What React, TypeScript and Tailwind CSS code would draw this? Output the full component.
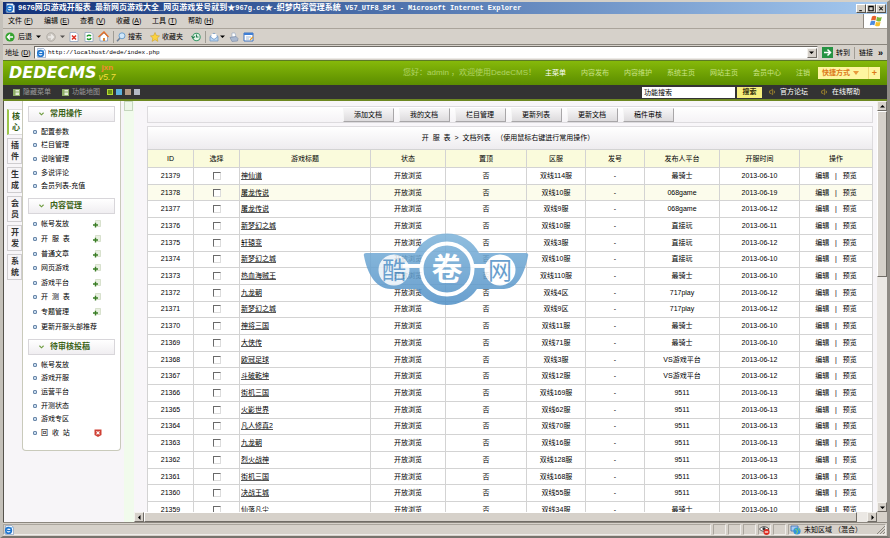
import type { ReactNode } from "react";
import { Volume1 } from "lucide-react";

type GameRow = {
  id: number;
  title: string;
  server: string;
  platform: string;
  date: string;
};

const rows: GameRow[] = [
  { id: 21379, title: "神仙道", server: "双线114服", platform: "最骑士", date: "2013-06-10" },
  { id: 21378, title: "屠龙传说", server: "双线10服", platform: "068game", date: "2013-06-19" },
  { id: 21377, title: "屠龙传说", server: "双线9服", platform: "068game", date: "2013-06-12" },
  { id: 21376, title: "新梦幻之城", server: "双线10服", platform: "直接玩", date: "2013-06-11" },
  { id: 21375, title: "轩辕变", server: "双线3服", platform: "直接玩", date: "2013-06-12" },
  { id: 21374, title: "新梦幻之城", server: "双线10服", platform: "直接玩", date: "2013-06-10" },
  { id: 21373, title: "热血海贼王", server: "双线110服", platform: "最骑士", date: "2013-06-10" },
  { id: 21372, title: "九龙朝", server: "双线4区", platform: "717play", date: "2013-06-12" },
  { id: 21371, title: "新梦幻之城", server: "双线9区", platform: "717play", date: "2013-06-12" },
  { id: 21370, title: "神将三国", server: "双线11服", platform: "最骑士", date: "2013-06-10" },
  { id: 21369, title: "大侠传", server: "双线71服", platform: "最骑士", date: "2013-06-10" },
  { id: 21368, title: "欧冠足球", server: "双线3服", platform: "VS游戏平台", date: "2013-06-12" },
  { id: 21367, title: "斗破乾坤", server: "双线12服", platform: "VS游戏平台", date: "2013-06-12" },
  { id: 21366, title: "街机三国", server: "双线169服", platform: "9511", date: "2013-06-13" },
  { id: 21365, title: "火影世界", server: "双线62服", platform: "9511", date: "2013-06-13" },
  { id: 21364, title: "凡人修真2", server: "双线70服", platform: "9511", date: "2013-06-13" },
  { id: 21363, title: "九龙朝", server: "双线16服", platform: "9511", date: "2013-06-13" },
  { id: 21362, title: "烈火战神", server: "双线128服", platform: "9511", date: "2013-06-13" },
  { id: 21361, title: "街机三国", server: "双线168服", platform: "9511", date: "2013-06-13" },
  { id: 21360, title: "决战王城", server: "双线55服", platform: "9511", date: "2013-06-13" },
  { id: 21359, title: "仙落凡尘", server: "双线34服", platform: "最骑士", date: "2013-06-10" },
];

const columns = [
  { label: "ID", width: "w-[46px]" },
  { label: "选择", width: "w-[46px]" },
  { label: "游戏标题", width: "w-[131px]" },
  { label: "状态", width: "w-[75px]" },
  { label: "置顶", width: "w-[81px]" },
  { label: "区服", width: "w-[59px]" },
  { label: "发号", width: "w-[59px]" },
  { label: "发布人平台", width: "w-[75px]" },
  { label: "开服时间", width: "w-[80px]" },
  { label: "操作", width: "w-[73px]" },
];

const ieMenus = [
  ["文件", "F"],
  ["编辑", "E"],
  ["查看", "V"],
  ["收藏", "A"],
  ["工具", "T"],
  ["帮助", "H"],
];

const topNav = ["主菜单", "内容发布", "内容维护", "系统主页", "网站主页", "会员中心", "注销"];
const sideTabs = ["核心", "插件", "生成", "会员", "开发", "系统"];
const toolButtons = ["添加文档", "我的文档", "栏目管理", "更新列表", "更新文档", "稿件审核"];

const sideGroups = [
  {
    title: "常用操作",
    height: "h-[68px]",
    items: ["配置参数", "栏目管理", "说啥管理", "多说评论", "会员列表-充值"],
    addable: 0,
  },
  {
    title: "内容管理",
    height: "h-[117px]",
    items: ["帐号发放", "开  服  表", "普通文章", "网页游戏", "游戏平台", "开  测  表", "专题管理", "更新开服头部推荐"],
    addable: 7,
  },
  {
    title: "待审核投稿",
    height: "h-[82px]",
    items: ["帐号发放", "游戏开服", "运营平台", "开测状态", "游戏专区", "回  收  站"],
    addable: 0,
  },
];

function IeIcon() {
  return (
    <svg viewBox="0 0 12 12" className="h-[10px] w-[10px] shrink-0">
      <path d="M2 .5h7l2.5 2.5v8.500H2z" fill="#f4f9ff" stroke="#7892b8" strokeWidth=".8" />
      <circle cx="5.500" cy="6.500" r="3.400" fill="none" stroke="#1e73cc" strokeWidth="1.900" />
      <path d="M2.500 6.700h6.500" stroke="#1e73cc" strokeWidth="1.400" />
      <path d="M1 10C3 5 7 2.500 10.500 3" fill="none" stroke="#58a6e8" strokeWidth=".9" />
    </svg>
  );
}

function Divider() {
  return <span className="h-[12px] w-px shrink-0 bg-[#a09c94]" />;
}

function Triangle({ dir }: { dir: "up" | "down" | "left" | "right" }) {
  const paths = {
    up: "M1 4.500h5L3.500 2z",
    down: "M1 2.500h5L3.500 5z",
    left: "M4.500 1v5L2 3.500z",
    right: "M2.500 1v5L5 3.500z",
  };
  return (
    <svg viewBox="0 0 7 7" className="h-[7px] w-[7px]">
      <path d={paths[dir]} fill="#000" />
    </svg>
  );
}

function ScrollButton({ dir, label }: { dir: "up" | "down" | "left" | "right"; label: string }) {
  return (
    <button
      aria-label={label}
      className="flex h-[10px] w-[10px] shrink-0 items-center justify-center border border-t-[#f4f2ee] border-r-[#706c66] border-b-[#706c66] border-l-[#f4f2ee] bg-[#d6d1ca]"
    >
      <Triangle dir={dir} />
    </button>
  );
}

function TitleBar() {
  return (
    <header className="flex h-[12px] shrink-0 items-center bg-linear-to-r from-[#123078] to-[#a6caf0] pl-[2px] text-[8px] font-bold text-white">
      <IeIcon />
      <h1 className="ml-[3px] flex-1 whitespace-pre font-['Liberation_Mono','Noto_Sans_CJK_SC',monospace] leading-[12px]">
        <span className="text-[7px]">967G</span>网页游戏开服表<span className="text-[7px]">_</span>最新网页游戏大全
        <span className="text-[7px]">_</span>网页游戏发号就到★<span className="text-[7px]">967g.cc</span>★
        <span className="text-[7px]">-</span>织梦内容管理系统
        <span className="text-[7px]"> V57_UTF8_SP1 - Microsoft Internet Explorer</span>
      </h1>
      <div className="flex pr-px">
        <WindowButton label="最小化">
          <path d="M2 6.500h3" />
        </WindowButton>
        <WindowButton label="最大化">
          <path d="M1.500 1.500h5v5h-5zM1.500 2h5" />
        </WindowButton>
        <WindowButton label="关闭">
          <path d="M2 2l4 4M6 2L2 6" />
        </WindowButton>
      </div>
    </header>
  );
}

function WindowButton({ label, children }: { label: string; children: ReactNode }) {
  return (
    <button
      aria-label={label}
      className="h-[9px] w-[10px] border border-t-white border-r-[#55524c] border-b-[#55524c] border-l-white bg-[#d4d0c8]"
    >
      <svg viewBox="0 0 8 8" className="h-[7px] w-[8px]" fill="none" stroke="#000" strokeWidth="1.200">
        {children}
      </svg>
    </button>
  );
}

function MenuBar() {
  return (
    <nav className="flex h-[15px] shrink-0 items-center border-b border-[#aaa49b] pl-[5px]">
      {ieMenus.map(([name, key]) => (
        <button key={key} className="w-[36px] text-left">
          {name} (<u>{key}</u>)
        </button>
      ))}
      <span className="ml-auto flex h-full w-[24px] items-center justify-center border-l border-[#8d8880] bg-white">
        <svg viewBox="0 0 14 12" className="h-[12px] w-[14px]">
          <path d="M3 1.500c1.500-1 3-1 4.300 0L6.500 5.500C5 4.700 3.600 4.700 2 5.500z" fill="#e8622c" />
          <path d="M8 1.800c1.500.9 3 .9 4.800.1l-1 4c-1.500.8-3 .8-4.600-.1z" fill="#7cb83a" />
          <path d="M1.800 6.300c1.500-.9 3-.8 4.500 0l-.9 4C4 9.500 2.500 9.500.8 10.300z" fill="#4a8be0" />
          <path d="M7 6.700c1.500.8 3 .8 4.600 0l-.9 4c-1.500.8-3 .8-4.600 0z" fill="#f5bf2d" />
        </svg>
      </span>
    </nav>
  );
}

function ToolBar() {
  return (
    <div className="flex h-[16px] shrink-0 items-center border-b border-[#89847c] pl-[2px]">
      <button className="flex items-center gap-[3px]">
        <svg viewBox="0 0 10 10" className="h-[10px] w-[10px]">
          <circle cx="5" cy="5" r="4.600" fill="#35a32f" />
          <path d="M8 5H2.700M5 2.500L2.500 5 5 7.500" fill="none" stroke="#fff" strokeWidth="1.400" />
        </svg>
        后退
        <Triangle dir="down" />
      </button>
      <button aria-label="前进" className="ml-[4px] flex items-center gap-[3px] opacity-60">
        <svg viewBox="0 0 10 10" className="h-[10px] w-[10px]">
          <circle cx="5" cy="5" r="4.300" fill="#c4c0ba" stroke="#8c8882" strokeWidth=".7" />
          <path d="M2 5h5.300M5 2.500L7.500 5 5 7.500" fill="none" stroke="#fff" strokeWidth="1.400" />
        </svg>
        <Triangle dir="down" />
      </button>
      <button aria-label="停止" className="ml-[3px]">
        <svg viewBox="0 0 10 10" className="h-[10px] w-[10px]">
          <path d="M1 .5h6l2 2v7H1z" fill="#fff" stroke="#8fa2bd" strokeWidth=".8" />
          <path d="M3 3.500l4 4M7 3.500l-4 4" stroke="#dc2f20" strokeWidth="1.500" />
        </svg>
      </button>
      <button aria-label="刷新" className="ml-[5px]">
        <svg viewBox="0 0 10 10" className="h-[10px] w-[10px]">
          <path d="M1 .5h6l2 2v7H1z" fill="#fff" stroke="#8fa2bd" strokeWidth=".8" />
          <path d="M3 4.500C3.500 2.800 6 2.800 7 4M7 6C6.500 7.800 4 7.800 3 6.500" fill="none" stroke="#209a2c" strokeWidth="1.500" />
        </svg>
      </button>
      <button aria-label="主页" className="ml-[4px]">
        <svg viewBox="0 0 11 11" className="h-[11px] w-[11px]">
          <path d="M2 5.500L6 2l3.500 3.500V10H2z" fill="#fff" stroke="#6f8fc4" strokeWidth=".7" />
          <path d="M.5 6L6 1l4.500 5" fill="none" stroke="#e2702a" strokeWidth="1.500" />
          <path d="M5 7h2v3H5z" fill="#d98b3b" />
        </svg>
      </button>
      <span className="ml-[4px] flex">
        <Divider />
      </span>
      <button className="ml-[2px] flex items-center gap-[2px]">
        <svg viewBox="0 0 10 10" className="h-[10px] w-[10px]">
          <path d="M1 9.200L4 6" stroke="#6e7f95" strokeWidth="1.500" />
          <circle cx="6" cy="3.800" r="3" fill="#cfe6fa" stroke="#6d9ecb" />
        </svg>
        搜索
      </button>
      <button className="ml-[8px] flex items-center gap-[2px]">
        <svg viewBox="0 0 10 10" className="h-[10px] w-[10px]">
          <path d="M5 .5l1.400 3 3.200.4-2.400 2.200.7 3.300L5 7.700 2.100 9.400l.7-3.300L.4 3.900l3.200-.4z" fill="#fbd23f" stroke="#c99a1c" strokeWidth=".5" />
        </svg>
        收藏夹
      </button>
      <button aria-label="历史" className="ml-[8px]">
        <svg viewBox="0 0 10 10" className="h-[10px] w-[10px]">
          <circle cx="5.500" cy="5" r="3.700" fill="#e4f4ea" stroke="#3d9a6a" strokeWidth="1.100" />
          <path d="M5.500 2.500V5h2M.5 4l1.500 2 2-1.500" fill="none" stroke="#24804c" strokeWidth="1.100" />
        </svg>
      </button>
      <span className="ml-[4px] flex">
        <Divider />
      </span>
      <button aria-label="邮件" className="ml-[3px] flex items-center">
        <svg viewBox="0 0 10 10" className="h-[10px] w-[10px]">
          <path d="M1 4.500L5 1l4 3.500V9H1z" fill="#b8d4f2" stroke="#6c92c0" strokeWidth=".7" />
          <path d="M2.500 2h5v3.500L5 7 2.500 5.500z" fill="#fff" />
          <path d="M1 4.500l4 3 4-3" fill="none" stroke="#6c92c0" strokeWidth=".7" />
        </svg>
        <Triangle dir="down" />
      </button>
      <button aria-label="打印" className="ml-[3px]">
        <svg viewBox="0 0 10 10" className="h-[10px] w-[10px]">
          <path d="M3 1h3l1 4H3z" fill="#fff" stroke="#92a4bf" strokeWidth=".6" />
          <path d="M1 5.500L7 4.500l2 2L8.500 9 3 9.500z" fill="#aab9d0" stroke="#7587a5" strokeWidth=".6" />
        </svg>
      </button>
      <button aria-label="编辑" className="ml-[4px]">
        <svg viewBox="0 0 11 10" className="h-[10px] w-[11px]">
          <path d="M1 1h9v8H1z" fill="#fff" stroke="#3f72bd" />
          <path d="M1 2h9" stroke="#3f7fd6" strokeWidth="2" />
          <path d="M3 5h5M3 7h3" stroke="#8aa6cc" strokeWidth=".8" />
          <path d="M7 8l3-3" stroke="#e19a2b" strokeWidth="1.200" />
        </svg>
      </button>
    </div>
  );
}

function AddressBar() {
  return (
    <div className="flex h-[15px] shrink-0 items-center pl-[2px]">
      <label htmlFor="address" className="w-[29px]">
        地址 (<u>D</u>)
      </label>
      <div className="flex h-[13px] flex-1 items-center border border-t-[#6f6b65] border-r-[#eceae6] border-b-[#eceae6] border-l-[#6f6b65] bg-white pl-px">
        <IeIcon />
        <input
          id="address"
          className="ml-[2px] min-w-0 flex-1 font-['Liberation_Mono',monospace] text-[6px] outline-none"
          defaultValue="http://localhost/dede/index.php"
        />
        <ScrollButton dir="down" label="展开地址列表" />
      </div>
      <button className="ml-[4px] flex items-center gap-[3px]">
        <svg viewBox="0 0 11 11" className="h-[11px] w-[11px]">
          <path d="M0 0h11v11H0z" fill="#269343" />
          <path d="M2 5.500h6M5.500 2.500l3 3-3 3" fill="none" stroke="#fff" strokeWidth="1.500" />
        </svg>
        转到
      </button>
      <span className="mx-[4px] flex">
        <Divider />
      </span>
      <button className="flex items-center gap-[5px] pr-[4px]">
        链接 <b className="text-[9px] leading-[10px]">»</b>
      </button>
    </div>
  );
}

function CmsHeader() {
  return (
    <div className="flex h-[25px] shrink-0 items-center border-t border-[#5b7a24] bg-linear-to-b from-[#86b90a] to-[#5b8d00] text-[#c9e387]">
      <div className="flex items-center pl-[6px]">
        <span className="font-['DejaVu_Sans',sans-serif] text-[16px] leading-[16px] font-bold text-white italic">
          DEDECMS
        </span>
        <span className="ml-[2px] flex flex-col font-['Liberation_Sans',sans-serif]">
          <b className="pl-[3px] text-[8px] leading-[8px] text-[#f58a35]">jxn</b>
          <span className="text-[9px] leading-[10px] text-[#f5dd3f] italic">v5.7</span>
        </span>
      </div>
      <p className="ml-auto text-[8px] text-[#b0d466]">您好：admin ，欢迎使用DedeCMS！</p>
      <nav className="ml-[9px] flex gap-[15px]">
        {topNav.map((item, i) => (
          <a key={item} href="#" className={i === 0 ? "text-white" : ""}>
            {item}
          </a>
        ))}
      </nav>
      <div className="mr-[7px] ml-[8px] flex h-[12px] w-[62px] items-center bg-[#fdf5a0] font-bold text-[#dc7a1a]">
        <button className="flex flex-1 items-center gap-[3px] pl-[4px]">
          快捷方式
          <svg viewBox="0 0 6 4" className="h-[4px] w-[6px]">
            <path d="M0 0h6L3 4z" fill="#e89a3c" />
          </svg>
        </button>
        <button aria-label="添加快捷方式" className="w-[12px] border-l border-[#efd778] text-[9px] leading-[12px]">
          +
        </button>
      </div>
    </div>
  );
}

function SmallGrid() {
  return (
    <svg viewBox="0 0 7 7" className="h-[7px] w-[7px]">
      <path d="M0 0h7v7H0z" fill="#8fae68" />
      <path d="M2.500 1H6v1.500H2.500zM2.500 3.500H6V6H2.500z" fill="#e4ecd8" />
    </svg>
  );
}

function SubBar() {
  return (
    <div className="flex h-[16px] shrink-0 items-center border-b-2 border-[#6d8822] bg-[#333] text-[#9b9b9b]">
      <button className="ml-[10px] flex items-center gap-[3px]">
        <SmallGrid />
        隐藏菜单
      </button>
      <button className="ml-[11px] flex items-center gap-[3px]">
        <SmallGrid />
        功能地图
      </button>
      <div className="ml-[7px] flex gap-[3px]">
        <button aria-label="绿色主题" className="h-[6px] w-[6px] border border-[#b7dc30] bg-[#6b8f18]" />
        <button aria-label="蓝色主题" className="h-[6px] w-[6px] bg-[#5bb1de]" />
        <button aria-label="棕色主题" className="h-[6px] w-[6px] bg-[#b59a84]" />
        <button aria-label="灰色主题" className="h-[6px] w-[6px] bg-[#b4b9c4]" />
      </div>
      <input
        aria-label="功能搜索"
        className="ml-auto h-[11px] w-[93px] bg-white pl-[2px] text-black outline-none"
        defaultValue="功能搜索"
      />
      <button className="ml-[2px] h-[11px] w-[25px] bg-[#f7ef7e] font-bold text-[#33300c]">搜索</button>
      <a href="#" className="ml-[7px] flex items-center gap-[3px] text-white">
        <Volume1 className="h-[8px] w-[8px] text-[#c8a52a]" />
        官方论坛
      </a>
      <a href="#" className="mr-[27px] ml-[13px] flex items-center gap-[3px] text-white">
        <Volume1 className="h-[8px] w-[8px] text-[#c8a52a]" />
        在线帮助
      </a>
    </div>
  );
}

function Sidebar() {
  return (
    <aside className="flex w-[130px] shrink-0 bg-[#f7f5f8]">
      <div className="flex w-[18px] flex-col gap-[3px] pt-[8px] pl-[3px]">
        {sideTabs.map((tab, i) => (
          <button
            key={tab}
            className={
              i === 0
                ? "h-[26px] border-y border-l-2 border-y-[#dcdcdc] border-l-[#9cc54a] bg-white px-[3px] text-[8px] leading-[11px] font-bold text-[#2f5a10]"
                : "h-[26px] border border-[#cfcdd0] bg-[#f7f5f8] px-[3px] text-[8px] leading-[11px] font-bold text-[#333]"
            }
          >
            {tab}
          </button>
        ))}
      </div>
      <div className="w-[99px] self-start rounded-b-[4px] border border-t-0 border-[#c9cabb] bg-white px-[5px] pt-[5px] pb-[5px]">
        {sideGroups.map((group) => (
          <section key={group.title} className="mb-[2px]">
            <h2 className="flex h-[16px] items-center border border-[#d8d6da] bg-linear-to-b from-white to-[#f0eef1] pl-[10px] text-[8px] font-bold text-[#3c6418]">
              <svg viewBox="0 0 6 4" className="mr-[6px] h-[4px] w-[5px]">
                <path d="M.5.500L3 3 5.500.500" fill="none" stroke="#6d9b3e" strokeWidth="1.300" />
              </svg>
              {group.title}
            </h2>
            <ul className={`mt-[3px] mb-[5px] grid auto-rows-fr ${group.height}`}>
              {group.items.map((item, i) => (
                <li key={item} className="flex min-h-0 items-center pl-[5px]">
                  <span className="mr-[4px] h-[4px] w-[4px] rounded-[1px] border border-[#6a87a8] bg-[#c8dcf0]" />
                  <a href="#" className="whitespace-pre">
                    {item}
                  </a>
                  {i < group.addable && (
                    <button aria-label={`添加${item}`} className="mr-[14px] ml-auto">
                      <svg viewBox="0 0 8 8" className="h-[8px] w-[8px]">
                        <path d="M2.500.5h5v6h-5z" fill="#e9f0e2" stroke="#c4d2b6" strokeWidth=".6" />
                        <path d="M0 5h5M2.500 2.700v4.800" stroke="#397d25" strokeWidth="1.400" />
                      </svg>
                    </button>
                  )}
                  {item === "回  收  站" && (
                    <button aria-label="清空回收站" className="mr-[13px] ml-auto">
                      <svg viewBox="0 0 8 8" className="h-[8px] w-[8px]">
                        <path d="M.5.500h7V6L4 8 .5 6z" fill="#cf4034" />
                        <path d="M2.500 2.300l3 3M5.500 2.300l-3 3" stroke="#fff" strokeWidth="1.200" />
                      </svg>
                    </button>
                  )}
                </li>
              ))}
            </ul>
          </section>
        ))}
      </div>
      <div className="ml-auto w-[10px] bg-[#f1fbec]">
        <button aria-label="收起侧栏" className="block h-[10px] w-[9px] border border-[#c5d6bd] bg-[#edf6e8]" />
      </div>
    </aside>
  );
}

function DocumentTable() {
  return (
    <table className="h-[370px] w-full table-fixed border-collapse bg-white text-center">
      <thead>
        <tr className="h-[18px] bg-[#fafbdc]">
          {columns.map((col) => (
            <th key={col.label} className={`border border-[#d3d3d3] p-0 font-normal ${col.width}`}>
              {col.label}
            </th>
          ))}
        </tr>
      </thead>
      <tbody className="[&_td]:border [&_td]:border-[#d3d3d3] [&_td]:p-0">
        {rows.map((row) => (
          <tr key={row.id} className={row.id === 21378 ? "bg-[#fcfcec]" : ""}>
            <td>{row.id}</td>
            <td>
              <input
                type="checkbox"
                aria-label={`选择 ${row.id}`}
                className="mx-auto block h-[8px] w-[8px] appearance-none border border-t-[#6a6a6a] border-r-[#dcdcdc] border-b-[#dcdcdc] border-l-[#6a6a6a] bg-white"
              />
            </td>
            <td className="text-left">
              <a href="#" className="ml-px border-b border-[#555]">
                {row.title}
              </a>
            </td>
            <td>开放浏览</td>
            <td>否</td>
            <td>{row.server}</td>
            <td>-</td>
            <td>{row.platform}</td>
            <td>{row.date}</td>
            <td className="pr-1 whitespace-pre">
              <a href="#">编辑</a>
              {"   |   "}
              <a href="#">预览</a>
            </td>
          </tr>
        ))}
      </tbody>
    </table>
  );
}

function Watermark() {
  return (
    <svg
      viewBox="0 0 166 74"
      className="pointer-events-none absolute top-[131px] left-[229px] h-[74px] w-[166px] opacity-85"
      fontFamily="Noto Sans CJK SC, sans-serif"
      textAnchor="middle"
    >
      <defs>
        <linearGradient id="wing" x1="0" y1="0" x2="0" y2="1">
          <stop offset="0" stopColor="#7db3da" />
          <stop offset="1" stopColor="#4f8fc6" />
        </linearGradient>
      </defs>
      <path
        d="M3 21H52A36 36 0 0 1 116 21H163Q166 21 165 24C162 40 155 57 141 57H114A36 36 0 0 1 54 57H28C12 57 4 40 1 24Q0 21 3 21Z"
        fill="url(#wing)"
      />
      <path d="M40 34H60M108 34H128" stroke="#fff" strokeWidth="4" />
      <circle cx="31" cy="38" r="15.500" fill="#fff" opacity=".85" />
      <circle cx="137" cy="38" r="15.500" fill="#fff" />
      <circle cx="84" cy="37" r="25.500" fill="none" stroke="#fff" strokeWidth="4" />
      <text x="31" y="47" fontSize="24" fill="#4f8fc6">
        酷
      </text>
      <text x="84" y="48" fontSize="31" fontWeight="bold" fill="#fff">
        卷
      </text>
      <text x="137" y="47" fontSize="24" fill="#4f8fc6">
        网
      </text>
    </svg>
  );
}

function MainPane() {
  return (
    <main className="flex min-w-0 flex-1 flex-col">
      <div className="flex min-h-0 flex-1">
        <div className="relative min-w-0 flex-1 overflow-hidden bg-[#f8f6f9] pt-[5px] pr-[4px] pl-[13px]">
          <div className="flex h-[17px] items-center justify-center gap-[5px] border border-[#dddbde] bg-linear-to-b from-white to-[#f5f3f6] pr-[4px]">
            {toolButtons.map((label) => (
              <button
                key={label}
                className="h-[14px] w-[51px] border border-t-[#f5f5f5] border-r-[#a8a6a8] border-b-[#a8a6a8] border-l-[#f5f5f5] bg-linear-to-b from-[#f6f5f6] to-[#dddbdd]"
              >
                {label}
              </button>
            ))}
          </div>
          <h2 className="mt-[3px] flex h-[23px] items-center justify-center border border-b-0 border-[#dddbde] bg-linear-to-b from-white to-[#eeecef] pr-[4px] whitespace-pre">
            开  服  表  &gt;  文档列表   （使用鼠标右键进行常用操作）
          </h2>
          <DocumentTable />
          <Watermark />
        </div>
        <div className="flex w-[10px] flex-col bg-[#ebe8e4]">
          <ScrollButton dir="up" label="向上滚动" />
          <span className="h-[166px] border border-t-white border-r-[#706c66] border-b-[#706c66] border-l-white bg-[#d6d1ca]" />
          <span className="mt-auto flex">
            <ScrollButton dir="down" label="向下滚动" />
          </span>
        </div>
      </div>
      <div className="flex h-[10px] shrink-0 bg-[#ebe8e4]">
        <ScrollButton dir="left" label="向左滚动" />
        <span className="mr-[10px] flex-1 border border-t-white border-r-[#706c66] border-b-[#706c66] border-l-white bg-[#d6d1ca]" />
        <ScrollButton dir="right" label="向右滚动" />
        <span className="w-[10px] bg-[#d6d1ca]" />
      </div>
    </main>
  );
}

function StatusBar() {
  return (
    <footer className="flex h-[14px] shrink-0 items-center gap-[2px] border-t border-[#8c877f] pr-px">
      <span className="flex h-[11px] flex-1 items-center border border-t-[#aaa59d] border-r-[#efedea] border-b-[#efedea] border-l-[#aaa59d]">
        <IeIcon />
      </span>
      {["security", "popup", "zone", "privacy", "cert"].map((name) => (
        <span
          key={name}
          className="flex h-[11px] w-[13px] items-center justify-center border border-t-[#aaa59d] border-r-[#efedea] border-b-[#efedea] border-l-[#aaa59d]"
        >
          {name === "privacy" && (
            <svg viewBox="0 0 11 10" className="h-[10px] w-[11px] shrink-0">
              <path d="M.5 4C3 1 7 1 10 4 7 7 3 7 .5 4z" fill="#fff" stroke="#333" strokeWidth=".9" />
              <circle cx="5" cy="3.800" r="1.600" fill="#333" />
              <circle cx="7.500" cy="7" r="3" fill="#dc2b20" />
              <path d="M5.800 7h3.400" stroke="#fff" strokeWidth="1.200" />
            </svg>
          )}
        </span>
      ))}
      <span className="flex h-[11px] w-[98px] items-center gap-[3px] border border-t-[#aaa59d] border-r-[#efedea] border-b-[#efedea] border-l-[#aaa59d] pl-px">
        <svg viewBox="0 0 11 10" className="h-[10px] w-[11px]">
          <path d="M1 1h7v5H1z" fill="#a8cdf3" stroke="#3a6ab0" strokeWidth=".8" />
          <circle cx="7" cy="6" r="3.600" fill="#3194dc" />
          <path d="M5 4l2 1 .5 2-1.500 2M8 3l1.500 2.500" fill="none" stroke="#7dd06a" />
        </svg>
        <span className="flex-1 whitespace-nowrap">未知区域 （混合）</span>
        <svg viewBox="0 0 9 9" className="h-[9px] w-[9px]">
          <path d="M1 9l8-8M4 9l5-5M7 9l2-2" stroke="#8c877f" />
        </svg>
      </span>
    </footer>
  );
}

export default function App() {
  return (
    <div className="flex h-screen flex-col overflow-hidden border-x-[3px] border-t-2 border-b-2 border-t-[#d4d0c8] border-r-[#8f8b85] border-b-[#77736d] border-l-[#c4c0b9] bg-[#d6d1ca] font-['Liberation_Sans','Noto_Sans_CJK_SC',sans-serif] text-[7px] leading-[10px] text-black">
      <TitleBar />
      <MenuBar />
      <ToolBar />
      <AddressBar />
      <CmsHeader />
      <SubBar />
      <div className="flex min-h-0 flex-1 border-l border-[#55524c]">
        <Sidebar />
        <MainPane />
      </div>
      <StatusBar />
    </div>
  );
}
